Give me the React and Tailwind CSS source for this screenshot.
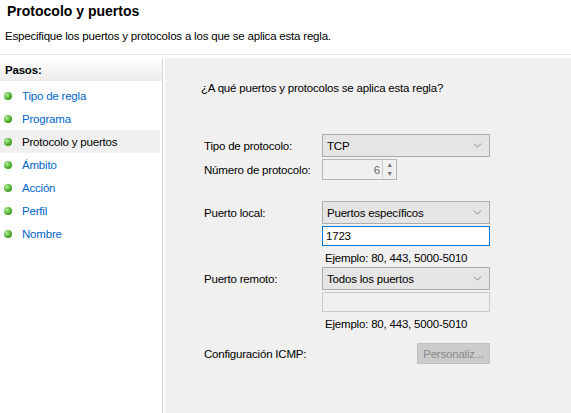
import { ChevronDown } from "lucide-react";

const steps = ["Tipo de regla", "Programa", "Protocolo y puertos", "Ámbito", "Acción", "Perfil", "Nombre"];

function Bullet() {
  return (
    <span className="w-[8px] h-[8px] rounded-full shrink-0 bg-[radial-gradient(circle_at_35%_35%,#b8f0a0,#4caf2c_55%,#2e7d1a)]" />
  );
}

function Select({ value }) {
  return (
    <div className="w-[168px] h-[23px] border border-[#adadad] bg-[#e5e5e5] flex items-center justify-between pl-[4px] pr-[5px]">
      <span>{value}</span>
      <ChevronDown size={13} strokeWidth={1.2} className="text-[#555]" />
    </div>
  );
}

export default function App() {
  return (
    <div className="w-[571px] h-[413px] bg-white flex flex-col overflow-hidden text-[11.5px] leading-[16px] tracking-[-0.2px] text-black" style={{ fontFamily: '"Liberation Sans", Arial, sans-serif' }}>
      {/* cabecera */}
      <div className="h-[55px] pl-[7px] pt-[2px] border-b border-[#e3e3e3] shrink-0">
        <h1 className="text-[14px] font-bold leading-[18px] tracking-normal">Protocolo y puertos</h1>
        <p className="mt-[8px] -ml-[2px]">Especifique los puertos y protocolos a los que se aplica esta regla.</p>
      </div>
      <div className="flex flex-1 pt-[3px]">
        {/* pasos */}
        <div className="w-[163px] border-r border-[#d6d6d6] shrink-0">
          <div className="h-[23px] flex items-center pl-[5px] font-bold bg-linear-to-b from-white to-[#ececec]">Pasos:</div>
          <ul className="pt-[3px]">
            {steps.map((s, i) => (
              <li key={s} className={`h-[23px] flex items-center gap-[10px] pl-[4px] mr-[2px] ${i === 2 ? "bg-[#f0f0f0] text-black" : "text-[#0066cc]"}`}>
                <Bullet />
                <span>{s}</span>
              </li>
            ))}
          </ul>
        </div>
        {/* formulario */}
        <div className="flex-1 ml-[2px] bg-[#f0f0f0] pl-[36px] pt-[22px]">
          <p>¿A qué puertos y protocolos se aplica esta regla?</p>
          <div className="mt-[38px] grid grid-cols-[118px_168px] items-center gap-y-[2px] pl-[3px]">
            <span>Tipo de protocolo:</span>
            <Select value="TCP" />
            <span>Número de protocolo:</span>
            <div className="w-[75px] h-[21px] border border-[#b5b5b5] bg-[#f0f0f0] flex items-center justify-end">
              <span className="text-[#6d6d6d] pr-[2px]">6</span>
              <div className="w-[14px] h-full border-l border-[#cfcfcf] flex flex-col text-[7px] leading-[9px] text-[#777] items-center">
                <span>▲</span>
                <span>▼</span>
              </div>
            </div>

            <span className="mt-[19px]">Puerto local:</span>
            <div className="mt-[19px]"><Select value="Puertos específicos" /></div>
            <span />
            <div className="w-[168px] h-[20px] border border-[#0078d7] bg-white flex items-center pl-[3px]">1723</div>
            <span />
            <span className="h-[17px] leading-[20px] pl-[3px]">Ejemplo: 80, 443, 5000-5010</span>

            <span>Puerto remoto:</span>
            <Select value="Todos los puertos" />
            <span />
            <div className="w-[168px] h-[20px] border border-[#cccccc] bg-[#f0f0f0]" />
            <span />
            <span className="h-[17px] leading-[20px] pl-[3px]">Ejemplo: 80, 443, 5000-5010</span>

            <span className="mt-[10px]">Configuración ICMP:</span>
            <div className="mt-[10px] flex justify-end">
              <div className="w-[73px] h-[21px] border border-[#bfbfbf] bg-[#cccccc] text-[#8a8a8a] flex items-center justify-center">Personaliz...</div>
            </div>
          </div>
        </div>
      </div>
    </div>
  );
}
